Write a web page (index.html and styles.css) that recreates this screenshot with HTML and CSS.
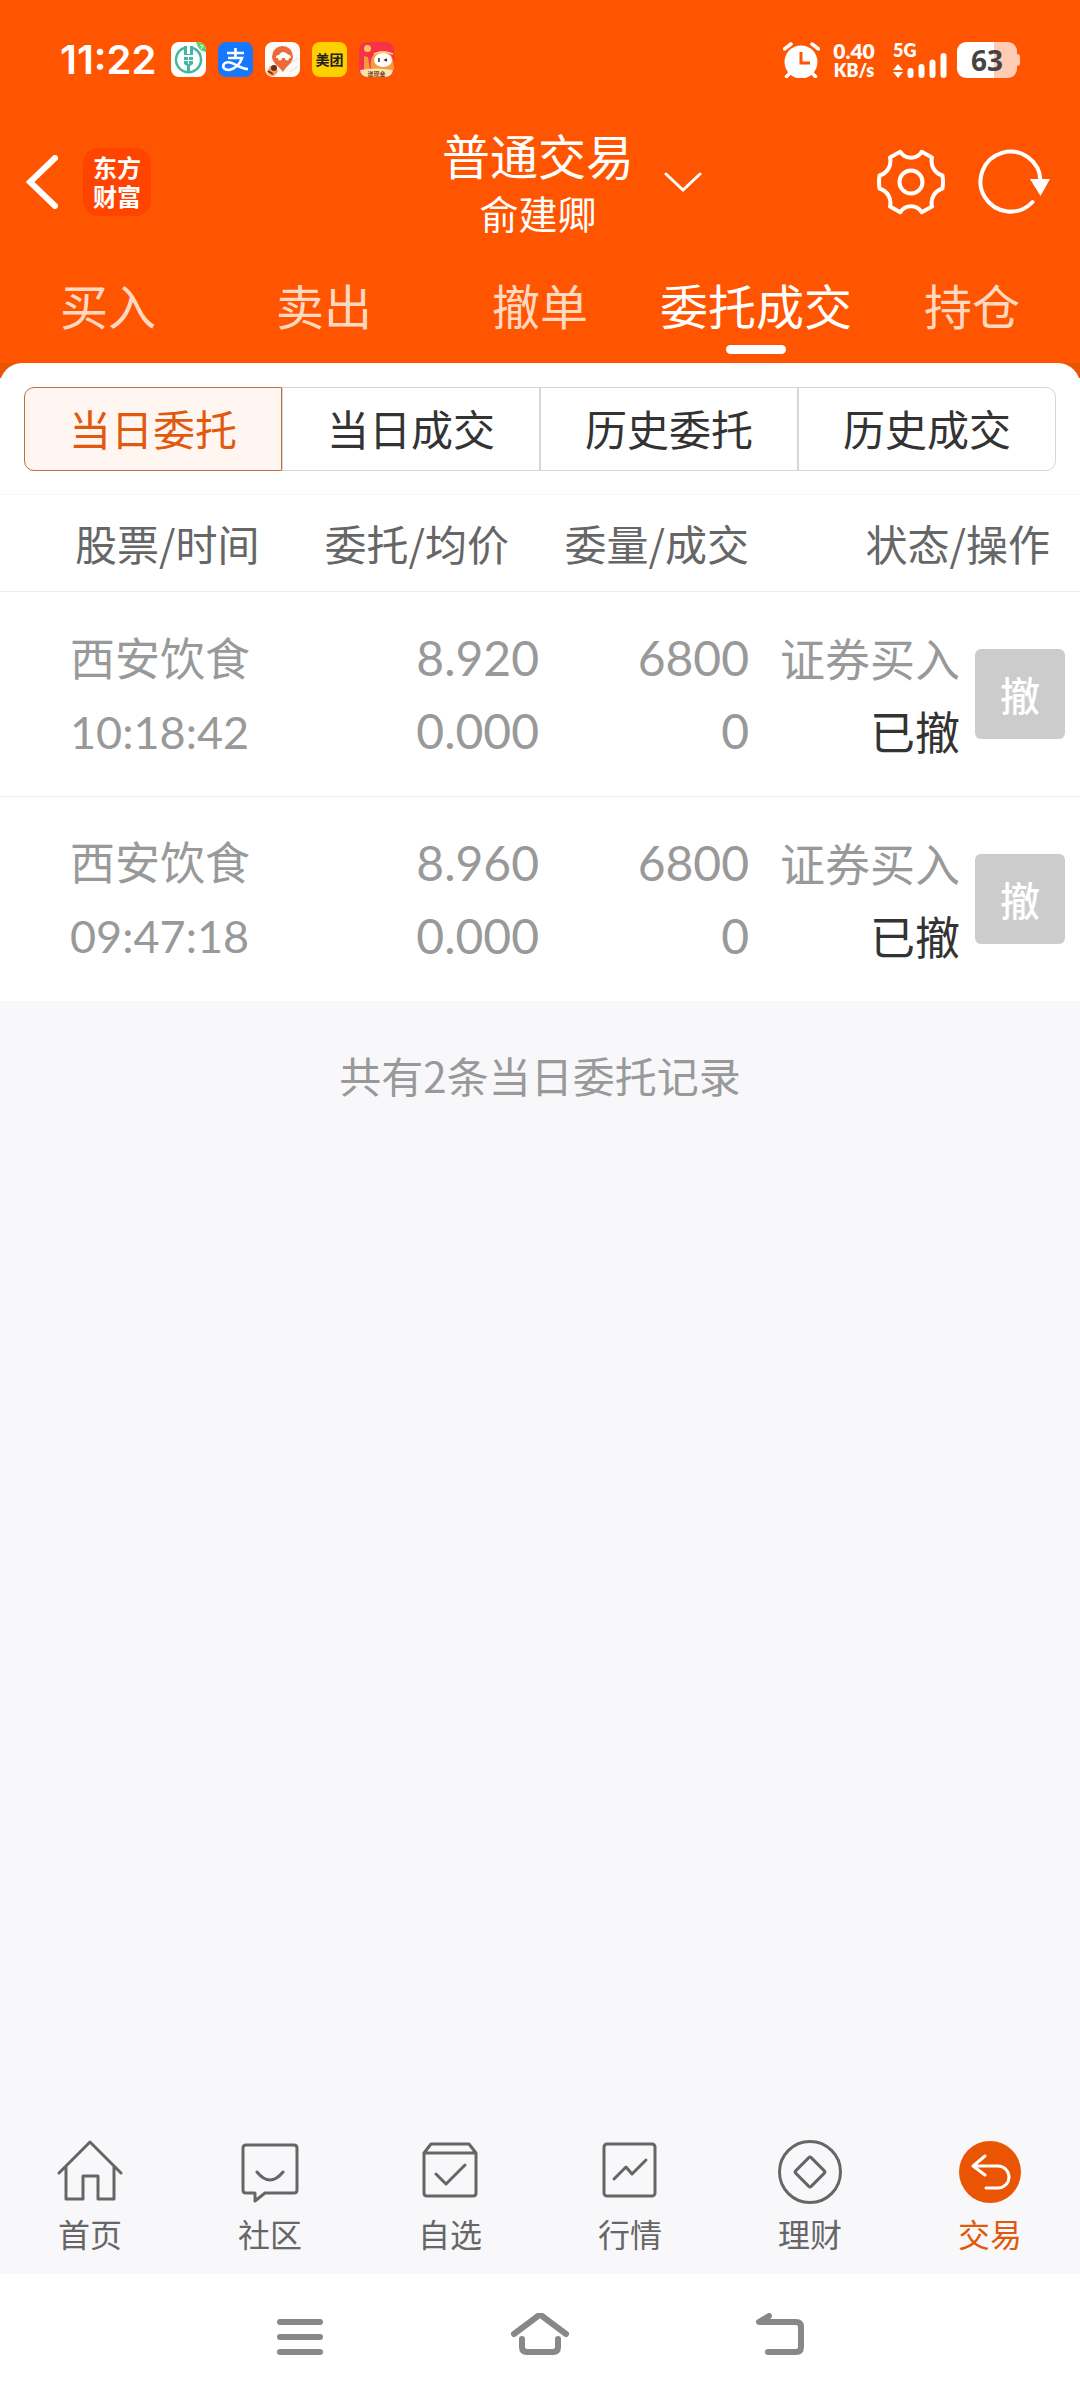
FILE: index.html
```html
<!DOCTYPE html>
<html lang="zh-CN">
<head>
  <meta charset="UTF-8">
  <meta name="viewport" content="width=device-width, initial-scale=1.0">
  <title>普通交易</title>
  <link rel="stylesheet" href="styles.css">
</head>
<body>
  <header class="header">
    <div class="status">
      <span class="clock">11:22</span>
      <div class="apps">
        <svg class="app" viewBox="0 0 35 35">
          <rect width="35" height="35" rx="8" fill="#fff"/>
          <path d="M25 0h2a8 8 0 0 1 8 8v2Q27 9 25 0z" fill="#62cf6a"/>
          <path d="M29 3l3 1-2 3" fill="none" stroke="#fff" stroke-width="1"/>
          <path d="M13 6A12.500 12.500 0 1 0 22 6" fill="none" stroke="#45b5a4" stroke-width="2.500"/>
          <path d="M13 4h3v8h3V4h3v9h-9z" fill="#45b5a4"/>
          <path d="M13 15h9v7l-3 2v6h-3v-6l-3-2z" fill="#45b5a4"/>
          <path d="M17.500 14v8M13 18.500h9" stroke="#fff" stroke-width="1"/>
        </svg>
        <svg class="app" viewBox="0 0 35 35">
          <rect width="35" height="35" rx="8" fill="#1677ff"/>
          <path d="M9 11h17M17.500 6v10M10 16h14c-2 6-7 11-13 12-5 0-7-3-5-6 3-4 9-1 14 2 4 2 7 3 10 3" fill="none" stroke="#fff" stroke-width="2.600"/>
        </svg>
        <svg class="app" viewBox="0 0 35 35">
          <rect width="35" height="35" rx="8" fill="#fdfbf9"/>
          <path d="M22 24l11-8M25 30l8-6" stroke="#e9e7e4" stroke-width="1.500"/>
          <path d="M18 30C14 24 7 21 7 14.500a10.500 10.500 0 0 1 21 0C28 21 21 24 18 30z" fill="#ee6b38"/>
          <path d="M11 16c0-3 2-3 3-3 2-4 6-4 9-.5 2 .5 3 1 3 3.500z" fill="#fff"/>
          <circle cx="15" cy="16.500" r="2" fill="#fff"/>
          <circle cx="22" cy="16.500" r="2" fill="#fff"/>
          <path d="M2 30l3-6 6-1 2 7-4 4H6a6 6 0 0 1-4-4z" fill="#f0a060"/>
          <circle cx="9" cy="26" r="3" fill="#7a2c14"/>
          <path d="M3 29l5 3" stroke="#7a2c14" stroke-width="1.500"/>
        </svg>
        <svg class="app" viewBox="0 0 35 35">
          <rect width="35" height="35" rx="8" fill="#ffd000"/>
          <text x="17.500" y="23" class="app-name" text-anchor="middle">美团</text>
        </svg>
        <svg class="app" viewBox="0 0 35 35">
          <rect width="35" height="35" rx="8" fill="#f5324a"/>
          <path d="M12 28C10 14 16 9 24 9s11 7 11 19z" fill="#f79a3e"/>
          <path d="M5 14l4 1 2 13H5z" fill="#f79a3e"/>
          <circle cx="8.500" cy="6.500" r="3.500" fill="#ffc65a"/>
          <path d="M15 12q9-4 19 0" fill="none" stroke="#ffd27a" stroke-width="1.500"/>
          <ellipse cx="24" cy="18" rx="9" ry="7" fill="#fff"/>
          <path d="M20 16v4M28 17l-2 1 2 1" fill="none" stroke="#4a2a1c" stroke-width="1.500"/>
          <path d="M1 28q16-3 33 0a8 8 0 0 1-7 7H8a8 8 0 0 1-7-7z" fill="#fbe3b4"/>
          <text x="17.500" y="34" class="app-tag" text-anchor="middle">送现金</text>
        </svg>
      </div>
      <svg class="alarm" viewBox="0 0 37 36">
        <circle cx="18" cy="20" r="16.500" fill="#fff"/>
        <path d="M1.500 7L8 2M29 2l6.500 5M7 31l-3.500 3.500M29 31l3.500 3.500" stroke="#fff" stroke-width="3.500" stroke-linecap="round"/>
        <path d="M18 10v11h9" fill="none" stroke="#f50" stroke-width="3"/>
      </svg>
      <div class="speed"><span>0.40</span><small>KB/s</small></div>
      <div class="signal">
        <span>5G</span>
        <svg viewBox="0 0 54 26" width="54" height="26">
          <path d="M0 18l5-6 5 6zM0 20l5 6 5-6z" fill="#fff"/>
          <path d="M17.500 19v4M28.500 15v8M39.500 10.500V23M50.500 4v19" stroke="#fff" stroke-width="6" stroke-linecap="round"/>
        </svg>
      </div>
      <div class="battery"><span>63</span></div>
    </div>

    <div class="titlebar">
      <div class="left">
        <button class="icon-btn" aria-label="返回">
          <svg viewBox="0 0 32 54" width="32" height="54"><path d="M29 3L4 27l25 24" fill="none" stroke="#fff" stroke-width="6" stroke-linecap="round"/></svg>
        </button>
        <a class="brand" href="#">东方<br>财富</a>
      </div>
      <div class="account">
        <h1>普通交易</h1>
        <p>俞建卿</p>
      </div>
      <div class="right">
        <button class="icon-btn chevron" aria-label="切换账户">
          <svg viewBox="0 0 38 20" width="38" height="20"><path d="M2 2l17 16L36 2" fill="none" stroke="#fff" stroke-width="3" stroke-linecap="round"/></svg>
        </button>
        <button class="icon-btn" aria-label="设置">
          <svg viewBox="-34 -34 68 68" width="68" height="68">
            <path d="M-10.700-30.200A12.500 12.500 0 0 0 10.700-30.200L21-24.500A15 15 0 0 0 31.500-6.500Q32.500 0 31.500 6.500A15 15 0 0 0 21 24.500L10.700 30.200A12.500 12.500 0 0 0-10.700 30.200L-21 24.500A15 15 0 0 0-31.500 6.500Q-32.500 0-31.500-6.500A15 15 0 0 0-21-24.500z" fill="none" stroke="#fff" stroke-width="4" stroke-linejoin="round"/>
            <circle r="11.500" fill="none" stroke="#fff" stroke-width="4"/>
          </svg>
        </button>
        <button class="icon-btn" aria-label="刷新">
          <svg viewBox="0 0 72 68" width="72" height="68">
            <path d="M54.500 54A30 30 0 1 1 62.500 33" fill="none" stroke="#fff" stroke-width="4" stroke-linecap="round"/>
            <path d="M52 31h20l-9.500 17z" fill="#fff"/>
          </svg>
        </button>
      </div>
    </div>

    <nav class="tabs">
      <a href="#">买入</a>
      <a href="#">卖出</a>
      <a href="#">撤单</a>
      <a href="#" class="active">委托成交</a>
      <a href="#">持仓</a>
    </nav>
  </header>

  <main class="main">
    <div class="panel-back">
      <section class="panel">
        <div class="segments">
          <button class="segment active">当日委托</button>
          <button class="segment">当日成交</button>
          <button class="segment">历史委托</button>
          <button class="segment">历史成交</button>
        </div>
        <table class="orders">
          <colgroup>
            <col>
            <col class="col-price">
            <col class="col-amount">
            <col class="col-state">
            <col class="col-action">
          </colgroup>
          <thead>
            <tr>
              <th class="stock">股票/时间</th>
              <th class="price">委托/均价</th>
              <th>委量/成交</th>
              <th class="state" colspan="2">状态/操作</th>
            </tr>
          </thead>
          <tbody>
            <tr>
              <td class="stock">西安饮食<br><span class="time">10:18:42</span></td>
              <td class="num">8.920<br>0.000</td>
              <td class="num">6800<br>0</td>
              <td>证券买入<br><span class="done">已撤</span></td>
              <td class="action"><button class="cancel" disabled>撤</button></td>
            </tr>
            <tr>
              <td class="stock">西安饮食<br><span class="time">09:47:18</span></td>
              <td class="num">8.960<br>0.000</td>
              <td class="num">6800<br>0</td>
              <td>证券买入<br><span class="done">已撤</span></td>
              <td class="action"><button class="cancel" disabled>撤</button></td>
            </tr>
          </tbody>
        </table>
      </section>
    </div>
    <p class="summary">共有2条当日委托记录</p>
  </main>

  <nav class="bottom-nav">
    <a href="#">
      <svg viewBox="0 0 66 66"><path d="M2 34L33 3l31 31M9 28v32h17V37h15v23h16V28"/></svg>
      首页
    </a>
    <a href="#">
      <svg viewBox="0 0 66 66"><path d="M9 6h48q3 0 3 3v42q0 3-3 3H28l-10 8v-8H9q-3 0-3-3V9q0-3 3-3zM20 33q13 16 26 0"/></svg>
      社区
    </a>
    <a href="#">
      <svg viewBox="0 0 66 66"><path d="M7 14l7-9h38l7 9v40q0 3-3 3H10q-3 0-3-3zM7 14h52M19 35l10 10 19-19"/></svg>
      自选
    </a>
    <a href="#">
      <svg viewBox="0 0 66 66"><rect x="7" y="5" width="51" height="52" rx="3"/><path d="M17 40l12-12 6 7 14-14"/></svg>
      行情
    </a>
    <a href="#">
      <svg viewBox="0 0 66 66"><circle cx="33" cy="33" r="30.500"/><rect x="22" y="22" width="22" height="22" rx="2" transform="rotate(45 33 33)"/></svg>
      理财
    </a>
    <a href="#" class="active">
      <svg viewBox="0 0 66 66"><circle class="disc" cx="33" cy="33" r="31"/><path class="arrow" d="M28 17L16 27l12 9M16 27h25a11 11 0 0 1 0 22H29"/></svg>
      交易
    </a>
  </nav>

  <div class="system-nav">
    <button class="icon-btn" aria-label="最近任务">
      <svg viewBox="0 0 60 48" width="60" height="48"><path d="M10 9h40M10 24h40M10 39h40"/></svg>
    </button>
    <button class="icon-btn" aria-label="主屏幕">
      <svg viewBox="0 0 60 48" width="60" height="48"><path d="M4 21L28 3q2-2 4 0l24 18M12 26v8q0 5 5 5h26q5 0 5-5v-8"/></svg>
    </button>
    <button class="icon-btn" aria-label="返回">
      <svg viewBox="0 0 60 48" width="60" height="48"><path d="M19 3L9 9h37q5 0 5 5v20q0 5-5 5H18"/></svg>
    </button>
  </div>
</body>
</html>
```

FILE: styles.css
```css
* {
  box-sizing: border-box;
}

body {
  margin: 0;
  min-height: 100vh;
  display: flex;
  flex-direction: column;
  background: #f8f8fa;
  color: #333;
  font-family: "Noto Sans CJK SC", sans-serif;
}

a {
  color: inherit;
  text-decoration: none;
}

button {
  font-family: inherit;
  padding: 0;
  margin: 0;
}

h1, p {
  margin: 0;
  font-weight: 400;
}

svg {
  display: block;
}

.icon-btn {
  border: none;
  background: none;
}

/* Orange header */
.header {
  background: #ff5500;
  color: #fff;
}

.status {
  display: flex;
  align-items: center;
  height: 119px;
  padding: 0 63px 0 60px;
}

.clock {
  width: 111px;
  font: 600 40px/48px Inter, sans-serif;
}

.apps {
  display: flex;
  gap: 12px;
  margin-right: auto;
}

.app {
  width: 35px;
  height: 35px;
}

.app-name {
  font-size: 14px;
  font-weight: 700;
  fill: #222;
}

.app-tag {
  font-size: 6px;
  font-weight: 700;
  fill: #7a4a20;
}

.alarm {
  width: 37px;
  height: 36px;
  margin-right: 10px;
}

.speed {
  display: flex;
  flex-direction: column;
  align-items: center;
  width: 48px;
  margin-right: 15px;
  font: 800 21px/20px Lato, sans-serif;
}

.speed small {
  font-size: 18px;
  line-height: 18px;
}

.signal {
  height: 36px;
  margin-right: 10px;
  font: 800 18px/16px Lato, sans-serif;
}

.signal span {
  display: block;
  height: 10px;
}

.battery {
  position: relative;
  width: 60px;
  height: 36px;
  border-radius: 9px;
  background: linear-gradient(90deg, #fff 62%, #ffccb3 62%);
  color: #444;
  text-align: center;
  font: 700 28px/36px "Noto Sans", sans-serif;
}

.battery::after {
  content: "";
  position: absolute;
  top: 12px;
  left: 60px;
  width: 3px;
  height: 12px;
  border-radius: 0 3px 3px 0;
  background: #ffccb3;
}

.titlebar {
  display: grid;
  grid-template-columns: 1fr auto 1fr;
  align-items: center;
  height: 125px;
  padding: 0 30px 0 26px;
}

.left, .right {
  display: flex;
  align-items: center;
}

.brand {
  margin-left: 25px;
  width: 68px;
  height: 68px;
  padding-top: 4px;
  border-radius: 15px;
  background: #ff4400;
  text-align: center;
  font-size: 24px;
  font-weight: 700;
  line-height: 29px;
}

.account {
  text-align: center;
}

.account h1 {
  font-size: 48px;
  line-height: 60px;
}

.account p {
  font-size: 39px;
  line-height: 56px;
}

.right {
  gap: 33px;
}

.chevron {
  margin: 0 auto 0 30px;
}

.tabs {
  display: grid;
  grid-template-columns: repeat(5, 1fr);
  height: 119px;
}

.tabs a {
  display: flex;
  flex-direction: column;
  align-items: center;
  padding-top: 26px;
  font-size: 48px;
  line-height: 68px;
  color: #ffd8c2;
}

.tabs .active {
  color: #fff;
}

.tabs .active::after {
  content: "";
  width: 60px;
  height: 9px;
  margin-top: 7px;
  border-radius: 5px;
  background: #fff;
}

/* White panel with the orders */
.main {
  flex: 1;
}

.panel-back {
  background: linear-gradient(#e85500 15px, #fff 15px);
}

.panel {
  padding-top: 24px;
  border-radius: 22px 22px 0 0;
  background: #fff;
}

.segments {
  display: flex;
  margin: 0 24px 23px;
}

.segment {
  flex: 1;
  height: 84px;
  padding-bottom: 3px;
  border: 1px solid #d5d7d7;
  background: #fff;
  color: #333;
  font-size: 42px;
}

.segment:first-child {
  border-radius: 10px 0 0 10px;
}

.segment:last-child {
  border-radius: 0 10px 10px 0;
}

.segment.active {
  border-color: #c0703a;
  background: #fff6f2;
  color: #e2580c;
}

.orders {
  width: 100%;
  table-layout: fixed;
  border-collapse: collapse;
}

.col-price {
  width: 277px;
}

.col-amount {
  width: 210px;
}

.col-state {
  width: 211px;
}

.col-action {
  width: 120px;
}

.orders th {
  height: 97px;
  padding: 0 0 2px;
  border-top: 1px solid #f7f7f7;
  border-bottom: 1px solid #eee;
  color: #666;
  font-size: 42px;
  font-weight: 400;
  text-align: right;
}

.orders td {
  height: 205px;
  padding: 0;
  border-bottom: 1px solid #eee;
  color: #999;
  font-size: 45px;
  line-height: 73px;
  text-align: right;
}

.orders .stock {
  padding-left: 70px;
  text-align: left;
  white-space: nowrap;
}

.orders th.stock {
  padding-left: 75px;
}

.orders th.price,
.orders th.state {
  padding-right: 30px;
}

.orders .num {
  font-family: Lato, sans-serif;
  font-size: 48px;
}

.time {
  font-family: Lato, sans-serif;
}

.done {
  color: #333;
}

.orders tbody tr:last-child td {
  height: 204px;
  border-bottom: none;
}

.cancel {
  display: block;
  width: 90px;
  height: 90px;
  margin-left: 15px;
  border: none;
  border-radius: 6px;
  background: #ccc;
  color: #fff;
  font-size: 40px;
  font-weight: 500;
}

.summary {
  padding-top: 42px;
  color: #999;
  font-size: 42px;
  line-height: 64px;
  text-align: center;
}

/* App navigation */
.bottom-nav {
  display: grid;
  grid-template-columns: repeat(6, 1fr);
  height: 148px;
  padding-top: 13px;
}

.bottom-nav a {
  display: flex;
  flex-direction: column;
  align-items: center;
  gap: 6px;
  color: #666;
  font-size: 32px;
  line-height: 44px;
}

.bottom-nav svg {
  width: 66px;
  height: 66px;
  fill: none;
  stroke: #666;
  stroke-width: 3;
  stroke-linecap: round;
  stroke-linejoin: round;
}

.bottom-nav .active {
  color: #e2580c;
}

.bottom-nav .disc {
  fill: #ea5504;
  stroke: none;
}

.bottom-nav .arrow {
  stroke: #fff;
}

.system-nav {
  display: flex;
  justify-content: center;
  align-items: center;
  gap: 180px;
  height: 126px;
  background: #fff;
}

.system-nav svg {
  fill: none;
  stroke: #888;
  stroke-width: 6;
  stroke-linecap: round;
  stroke-linejoin: round;
}
```
